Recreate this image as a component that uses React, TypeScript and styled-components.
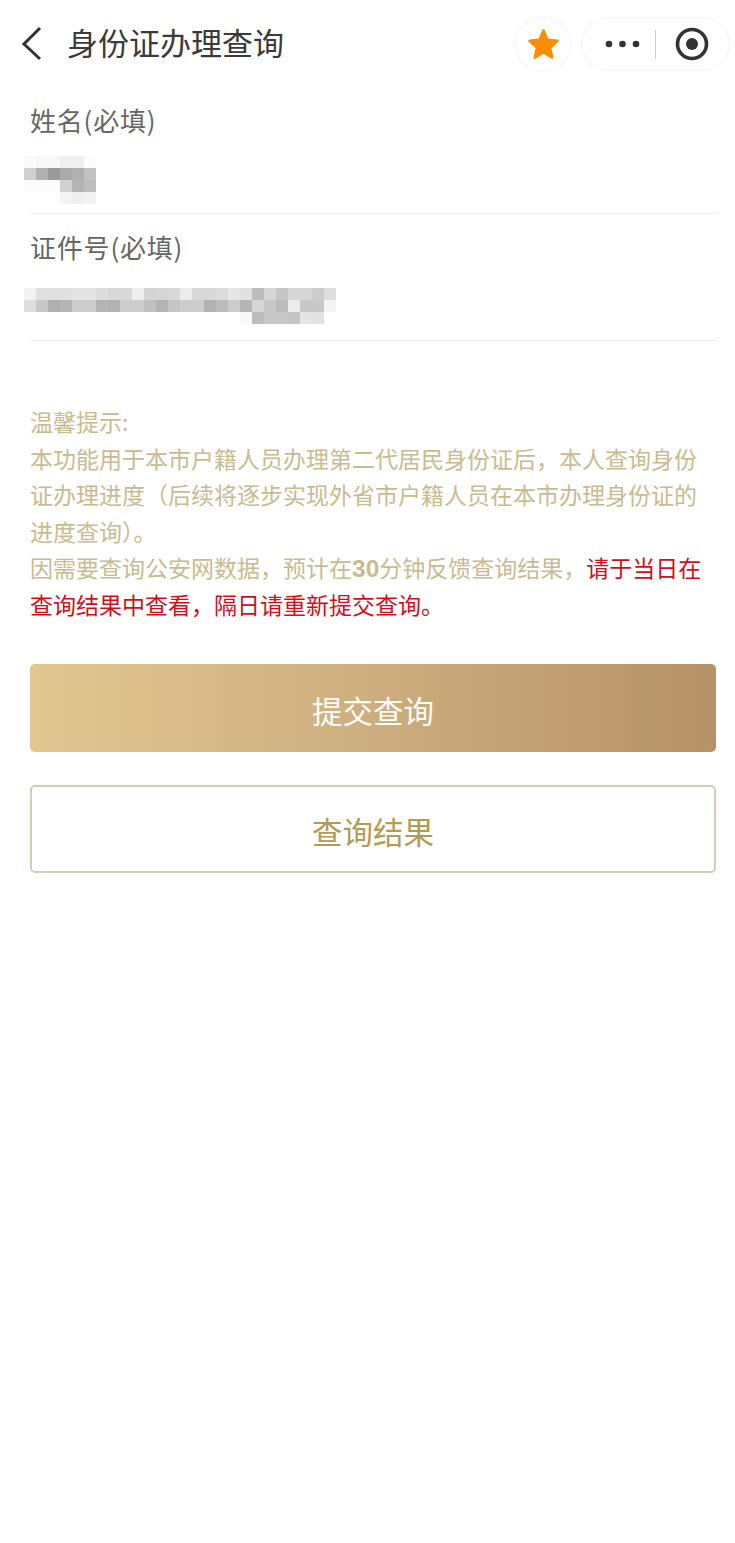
import { FunctionComponent } from 'react'
import styled, { createGlobalStyle } from 'styled-components'

const CELL = 12

const NAME_PIXELS = [
  ['fafafa', 'f8f8f8', 'f8f8f8', 'f0f0f0', 'f0f0f0', 'fcfcfc'],
  ['d0d0d0', 'b0b0b0', '9a9a9a', 'ababab', 'b0b0b0', 'c2c2c2'],
  ['fbfbfb', 'fcfcfc', 'fcfcfc', 'd0d0d0', 'b4b4b4', 'bdbdbd'],
  ['ffffff', 'ffffff', 'ffffff', 'f4f4f4', 'efefef', 'f2f2f2']
]

const ID_PIXELS = [
  'f2 e0 e0 e0 e4 e4 dc d8 d8 ee d4 d6 d8 ec d8 d8 dc e6 e0 bc d6 c6 d6 d6 cc de',
  'de c8 b0 b4 cc cc b4 b2 cc cc c0 b4 c6 cc cc b2 bc cc b4 d6 c8 bc ec c8 c8 f4',
  'ff ff ff ff ff ff ff ff ff ff ff ff ff ff ff ff ff ff f8 bc c8 c8 c4 e4 e2 ff'
].map(row => row.split(' ').map(v => v + v + v))

const GlobalStyle = createGlobalStyle`
  html, body {
    margin: 0;
    padding: 0;
    background: #fff;
  }
  body {
    font-family: "Noto Sans CJK SC", "Noto Sans", sans-serif;
  }
`

const Page = styled.div`
  width: 735px;
  min-height: 1543px;
  background: #fff;
`

const NavBar = styled.div`
  display: flex;
  align-items: center;
  height: 88px;
  padding: 0 5px 0 20px;
  box-sizing: border-box;
`

const Title = styled.div`
  flex: 1;
  margin: -4px 0 0 25px;
  font-size: 31px;
  line-height: 40px;
  color: #3a3a3a;
`

const FavButton = styled.div`
  display: flex;
  align-items: center;
  justify-content: center;
  width: 56px;
  height: 55px;
  border: 1px solid #f4f4f4;
  border-radius: 50%;
  box-sizing: border-box;
  margin-right: 10px;
`

const Capsule = styled.div`
  display: flex;
  align-items: center;
  width: 149px;
  height: 54px;
  padding-left: 23px;
  border: 1px solid #f4f4f4;
  border-radius: 27px;
  box-sizing: border-box;
`

const CapsuleLine = styled.div`
  width: 1px;
  height: 29px;
  background: #cfcfcf;
  margin: 0 19px 0 15px;
`

const Form = styled.div`
  margin-top: -1px;
  padding: 0 17px 0 30px;
`

const Field = styled.div`
  display: flex;
  flex-direction: column;
  height: 127px;
  box-sizing: border-box;
  border-bottom: 1px solid #f0f0f0;
  padding-top: 14px;
`

const Label = styled.div`
  font-size: 26px;
  line-height: 38px;
  letter-spacing: 0.8px;
  color: #666;
`

const Pixels: FunctionComponent<{ rows: string[][]; className?: string }> = ({ rows, className }) => (
  <svg className={className} width={rows[0].length * CELL} height={rows.length * CELL}>
    {rows.map((row, y) =>
      row.map((c, x) => (
        <rect key={`${x}-${y}`} x={x * CELL} y={y * CELL} width={CELL} height={CELL} fill={`#${c}`} />
      ))
    )}
  </svg>
)

const Mosaic = styled(Pixels)<{ $top: number }>`
  display: block;
  flex: none;
  margin: ${p => p.$top}px 0 0 -6px;
`

const Notice = styled.div`
  margin: 62px 0 0;
  padding: 0 30px;
  font-size: 23px;
  line-height: 36.5px;
  color: #c9bb8f;
`

const Strong = styled.b`
  font-family: "Liberation Sans", sans-serif;
  font-size: 24.5px;
  font-weight: 700;
  line-height: 0;
`

const Warn = styled.span`
  color: #cf0f1c;
`

const Buttons = styled.div`
  display: flex;
  flex-direction: column;
  gap: 33px;
  margin: 42px 19px 0 30px;
`

const Button = styled.div<{ $outline?: boolean }>`
  display: flex;
  align-items: center;
  justify-content: center;
  height: 88px;
  padding-top: 3px;
  box-sizing: border-box;
  border-radius: 5px;
  font-size: 30.5px;
  color: ${p => (p.$outline ? '#b39a55' : '#fffdf6')};
  background: ${p =>
    p.$outline ? '#fff' : 'linear-gradient(90deg, #e2c791 0%, #d2b383 40%, #b59268 100%)'};
  border: ${p => (p.$outline ? '2px solid #d6cdb2' : 'none')};
`

const App: FunctionComponent = () => (
  <Page>
    <GlobalStyle />
    <NavBar>
      <svg width="22" height="36" viewBox="0 0 22 36">
        <polyline points="20,2 4,18 20,33" fill="none" stroke="#333" strokeWidth="3" />
      </svg>
      <Title>身份证办理查询</Title>
      <FavButton>
        <svg width="33" height="33" viewBox="0 0 34 34">
          <path
            d="M17 2.5 L21.2 12 L31.5 13.2 L23.8 20.2 L26 30.5 L17 25.3 L8 30.5 L10.2 20.2 L2.5 13.2 L12.8 12 Z"
            fill="#ff8c00"
            stroke="#ff8c00"
            strokeWidth="2.5"
            strokeLinejoin="round"
          />
        </svg>
      </FavButton>
      <Capsule>
        <svg width="35" height="8" viewBox="0 0 35 8">
          <circle cx="4" cy="4" r="3.3" fill="#333" />
          <circle cx="17.5" cy="4" r="3.3" fill="#333" />
          <circle cx="31" cy="4" r="3.3" fill="#333" />
        </svg>
        <CapsuleLine />
        <svg width="34" height="34" viewBox="0 0 34 34">
          <circle cx="17" cy="17" r="14.5" fill="none" stroke="#333" strokeWidth="3.6" />
          <circle cx="17" cy="17" r="6" fill="#333" />
        </svg>
      </Capsule>
    </NavBar>
    <Form>
      <Field>
        <Label>姓名(必填)</Label>
        <Mosaic rows={NAME_PIXELS} $top={17} />
      </Field>
      <Field>
        <Label>证件号(必填)</Label>
        <Mosaic rows={ID_PIXELS} $top={22} />
      </Field>
    </Form>
    <Notice>
      温馨提示:
      <br />
      本功能用于本市户籍人员办理第二代居民身份证后，本人查询身份证办理进度（后续将逐步实现外省市户籍人员在本市办理身份证的进度查询）。
      <br />
      因需要查询公安网数据，预计在<Strong>30</Strong>分钟反馈查询结果，
      <Warn>请于当日在查询结果中查看，隔日请重新提交查询。</Warn>
    </Notice>
    <Buttons>
      <Button>提交查询</Button>
      <Button $outline>查询结果</Button>
    </Buttons>
  </Page>
)

export default App
